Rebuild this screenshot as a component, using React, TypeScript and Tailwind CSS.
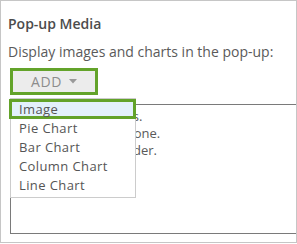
import React from "react";

export default function App() {
  const font = { fontFamily: '"Open Sans", "Lato", sans-serif' };
  return (
    <div className="w-[297px] h-[244px] bg-white" style={font}>
      <div className="relative h-[243px] border border-[#c6c6c6] overflow-hidden pl-[7px] pt-[13px]">
        <div className="h-[20px] text-[14px] leading-[20px] font-semibold text-[#4c4c4c]">Pop-up Media</div>
        <div className="mt-[8px] h-[20px] text-[14px] leading-[20px] text-[#5a5a5a]">
          Display images and charts in the pop-up:
        </div>
        <div className="relative mt-[6px] ml-[2px]">
          <button className="flex h-[27px] w-[88px] items-center justify-center gap-[7px] border-[3px] border-[#63a32a] bg-[#ececec] text-[14px] text-[#8c8c8c] tracking-[0.6px]">
            <span>ADD</span>
            <svg width="8" height="5" viewBox="0 0 8 5">
              <path d="M0 0 L8 0 L4 4.5 Z" fill="#999" />
            </svg>
          </button>
          <div className="absolute left-0 top-[30px] z-10 w-[126px] border border-[#cccccc] bg-white pb-[2px] text-[13px] tracking-[0.4px] text-[#555]">
            <div className="-ml-[2px] -mr-[1px] h-[20px] border-[3px] border-[#63a32a] bg-[#e3f1fb] pl-[7px] leading-[14px]">
              Image
            </div>
            {["Pie Chart", "Bar Chart", "Column Chart", "Line Chart"].map((t) => (
              <div key={t} className="h-[19px] pl-[8px] leading-[19px]">
                {t}
              </div>
            ))}
          </div>
        </div>
        <div className="mt-[9px] ml-[2px] -mr-[10px] h-[130px] border border-[#7a7a7a] pl-[7px] pt-[3px] text-[13px] leading-[17px] text-[#5a5a5a]">
          <div>Press ADD for items.</div>
          <div>Choose more than one.</div>
          <div>Drag charts to reorder.</div>
        </div>
      </div>
    </div>
  );
}
